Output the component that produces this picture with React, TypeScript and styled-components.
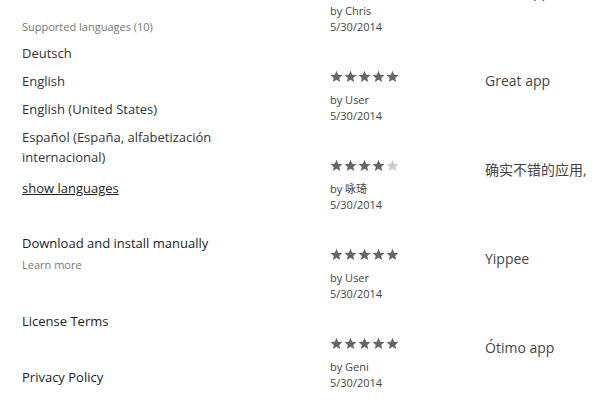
import styled, { createGlobalStyle } from "styled-components";

const GlobalStyle = createGlobalStyle`
  html, body {
    margin: 0;
    padding: 0;
    background: #fff;
    overflow: hidden;
  }
  body {
    font-family: "Open Sans", "Noto Sans CJK SC", sans-serif;
    color: #333;
  }
`;

const languages = [
  "Deutsch",
  "English",
  "English (United States)",
  "Español (España, alfabetización internacional)",
];

const reviews = [
  { rating: 5, author: "Chris", date: "5/30/2014", title: "Great app" },
  { rating: 5, author: "User", date: "5/30/2014", title: "Great app" },
  { rating: 4, author: "咏琦", date: "5/30/2014", title: "确实不错的应用," },
  { rating: 5, author: "User", date: "5/30/2014", title: "Yippee" },
  { rating: 5, author: "Geni", date: "5/30/2014", title: "Ótimo app" },
];

function Stars({ rating }: { rating: number }) {
  return (
    <StarRow>
      {[0, 1, 2, 3, 4].map((i) => (
        <Star key={i} $on={i < rating} viewBox="0 0 24 24">
          <path d="M12 1.5l3.1 7.3 7.9.6-6 5.2 1.9 7.7L12 18.2l-6.9 4.1L7 14.6 1 9.4l7.9-.6z" />
        </Star>
      ))}
    </StarRow>
  );
}

function App() {
  return (
    <>
      <GlobalStyle />
      <Page>
        <Details>
          <Caption>Supported languages (10)</Caption>
          <LangList>
            {languages.map((l) => (
              <Lang key={l}>{l}</Lang>
            ))}
          </LangList>
          <ShowLink href="#">show languages</ShowLink>

          <Item $gap={35}>Download and install manually</Item>
          <SmallLink>Learn more</SmallLink>

          <Item $gap={38}>License Terms</Item>
          <Item $gap={36}>Privacy Policy</Item>
        </Details>

        <Reviews>
          {reviews.map((r, i) => (
            <Review key={i}>
              <Meta>
                <Stars rating={r.rating} />
                <By>by {r.author}</By>
                <By>{r.date}</By>
              </Meta>
              <Title>{r.title}</Title>
            </Review>
          ))}
        </Reviews>
      </Page>
    </>
  );
}

const Page = styled.div`
  display: grid;
  grid-template-columns: 308px 1fr;
  padding-left: 22px;
  width: 596px;
  height: 407px;
  box-sizing: border-box;
  overflow: hidden;
`;

const Details = styled.div`
  display: flex;
  flex-direction: column;
  align-items: flex-start;
  padding-top: 19px;
  width: 230px;
`;

const Caption = styled.div`
  font-size: 11px;
  line-height: 16px;
  color: #777;
`;

const LangList = styled.div`
  display: flex;
  flex-direction: column;
  gap: 8px;
  margin-top: 8px;
`;

const Lang = styled.div`
  font-size: 13px;
  line-height: 20px;
`;

const ShowLink = styled.a`
  margin-top: 11px;
  font-size: 13px;
  line-height: 20px;
  color: #222;
  text-decoration: underline;
`;

const Item = styled.div<{ $gap: number }>`
  margin-top: ${(p) => p.$gap}px;
  font-size: 13px;
  line-height: 20px;
  color: #222;
`;

const SmallLink = styled.div`
  margin-top: 4px;
  font-size: 11px;
  line-height: 16px;
  color: #777;
`;

const Reviews = styled.div`
  display: flex;
  flex-direction: column;
  margin-top: -20px;
`;

const Review = styled.div`
  display: grid;
  grid-template-columns: 155px 1fr;
  height: 89px;
`;

const Meta = styled.div`
  display: flex;
  flex-direction: column;
`;

const StarRow = styled.div`
  display: flex;
  gap: 1px;
  height: 14px;
  align-items: center;
  margin-bottom: 9px;
`;

const Star = styled.svg<{ $on: boolean }>`
  width: 13px;
  height: 13px;
  fill: ${(p) => (p.$on ? "#666" : "#ccc")};
`;

const By = styled.div`
  font-size: 11px;
  line-height: 16px;
  color: #444;
`;

const Title = styled.div`
  margin-top: 2px;
  font-size: 14px;
  line-height: 20px;
  color: #444;
  white-space: nowrap;
`;

export default App;
